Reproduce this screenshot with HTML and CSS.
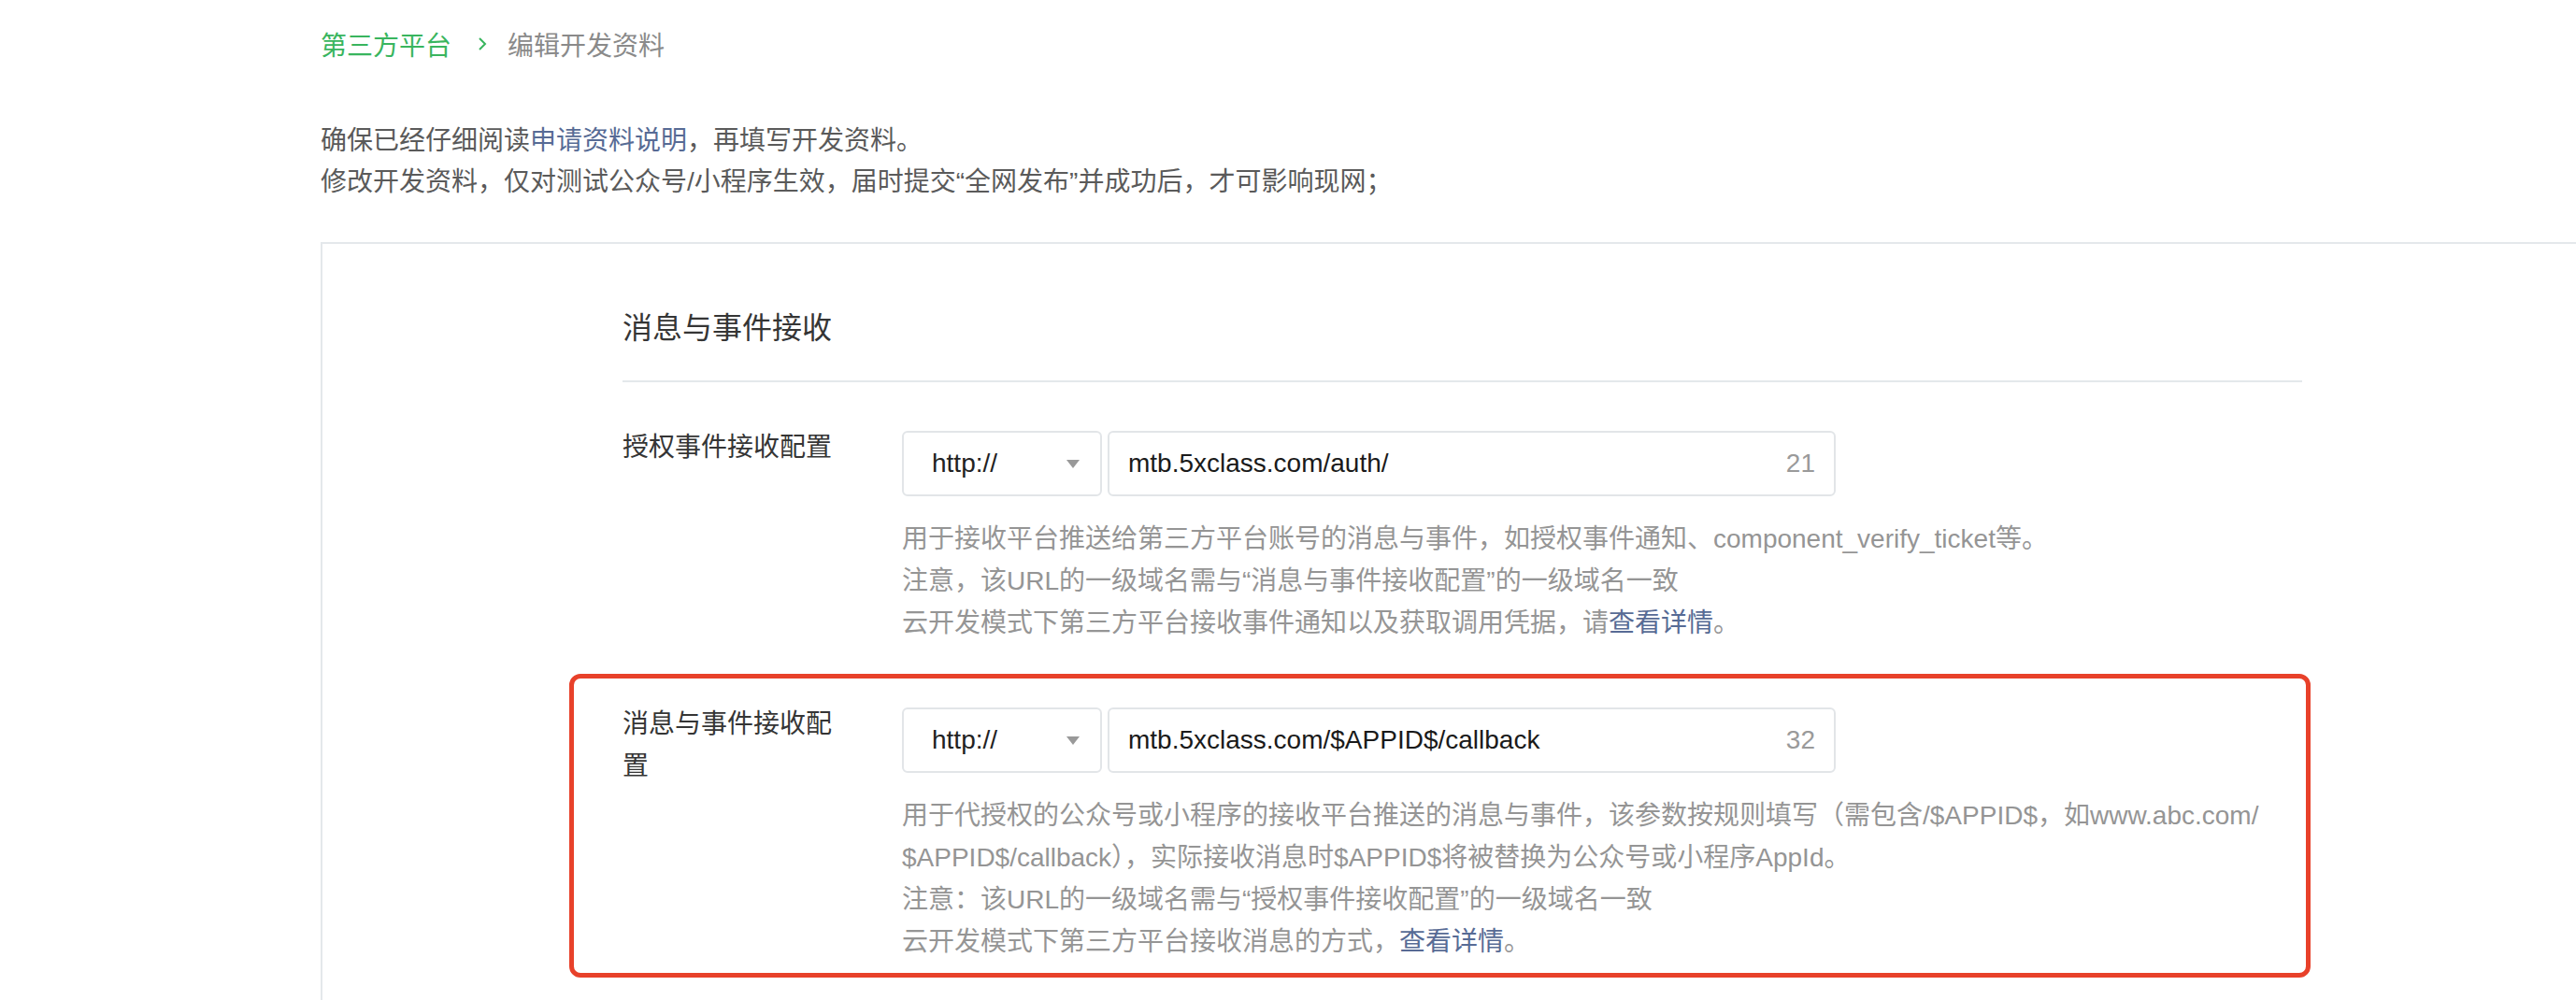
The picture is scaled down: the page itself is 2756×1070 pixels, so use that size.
FILE: index.html
```html
<!DOCTYPE html>
<html lang="zh-CN">
<head>
    <meta charset="UTF-8">
    <title>编辑开发资料</title>
    <link rel="stylesheet" href="styles.css">
</head>
<body>

    <div class="page">
        <div class="breadcrumb">
            <a class="crumb-link" href="#">第三方平台</a>
            <svg class="crumb-sep" width="10" height="16" viewBox="0 0 10 16"><polyline points="2,2 8,8 2,14" fill="none" stroke="#39b55e" stroke-width="2"/></svg>
            <span class="crumb-current">编辑开发资料</span>
        </div>

        <div class="intro">
            <p>确保已经仔细阅读<a href="#">申请资料说明</a>，再填写开发资料。</p>
            <p>修改开发资料，仅对测试公众号/小程序生效，届时提交“全网发布”并成功后，才可影响现网；</p>
        </div>

        <div class="card">
            <h2 class="card-title">消息与事件接收</h2>

            <div class="form-item">
                <label class="form-label">授权事件接收配置</label>
                <div class="form-body">
                    <div class="controls">
                        <div class="select">
                            <span>http://</span>
                            <i class="arrow"></i>
                        </div>
                        <div class="input">
                            <span class="value">mtb.5xclass.com/auth/</span>
                            <span class="counter">21</span>
                        </div>
                    </div>
                    <div class="help">
                        <p>用于接收平台推送给第三方平台账号的消息与事件，如授权事件通知、component_verify_ticket等。</p>
                        <p>注意，该URL的一级域名需与“消息与事件接收配置”的一级域名一致</p>
                        <p>云开发模式下第三方平台接收事件通知以及获取调用凭据，请<a href="#">查看详情</a>。</p>
                    </div>
                </div>
            </div>

            <div class="form-item marked">
                <label class="form-label">消息与事件接收配置</label>
                <div class="form-body">
                    <div class="controls">
                        <div class="select">
                            <span>http://</span>
                            <i class="arrow"></i>
                        </div>
                        <div class="input">
                            <span class="value">mtb.5xclass.com/$APPID$/callback</span>
                            <span class="counter">32</span>
                        </div>
                    </div>
                    <div class="help">
                        <p>用于代授权的公众号或小程序的接收平台推送的消息与事件，该参数按规则填写（需包含/$APPID$，如www.abc.com/<br>$APPID$/callback），实际接收消息时$APPID$将被替换为公众号或小程序AppId。</p>
                        <p>注意：该URL的一级域名需与“授权事件接收配置”的一级域名一致</p>
                        <p>云开发模式下第三方平台接收消息的方式，<a href="#">查看详情</a>。</p>
                    </div>
                </div>
            </div>
        </div>
    </div>

</body>
</html>
```

FILE: styles.css
```css
body {
    margin: 0;
    background-color: #fff;
    font-family: "Liberation Sans", "Noto Sans CJK SC", sans-serif;
    font-size: 28px;
    color: #353535;
    overflow: hidden;
}

p {
    margin: 0;
}

a {
    color: #576b95;
    text-decoration: none;
}

.page {
    padding: 27px 0 0 343px;
}

.breadcrumb {
    display: flex;
    align-items: center;
    height: 40px;
}

.crumb-link {
    color: #39b55e;
}

.crumb-sep {
    margin: 0 22px 0 28px;
}

.crumb-current {
    color: #8a8a8a;
}

.intro {
    margin-top: 62px;
    line-height: 44px;
    color: #5a5a5a;
}

.card {
    margin-top: 42px;
    margin-right: -40px;
    border: 2px solid #e4e8eb;
    padding: 68px 0 120px 321px;
}

.card-title {
    width: 1797px;
    margin: 0;
    padding-bottom: 34px;
    border-bottom: 2px solid #e4e8eb;
    font-size: 32px;
    font-weight: normal;
    line-height: 44px;
    color: #353535;
}

.form-item {
    display: flex;
    width: 1797px;
    margin-top: 52px;
}

.form-item + .form-item {
    margin-top: 68px;
}

.form-label {
    width: 232px;
    margin: -5px 67px 0 0;
    line-height: 45px;
    color: #353535;
}

.form-body {
    flex: 1;
}

.controls {
    display: flex;
    gap: 6px;
}

.select, .input {
    box-sizing: border-box;
    height: 70px;
    display: flex;
    align-items: center;
    border: 2px solid #e2e5e8;
    border-radius: 6px;
    background-color: #fff;
}

.select {
    width: 214px;
    padding: 0 22px 0 30px;
    justify-content: space-between;
    color: #222;
}

.arrow {
    width: 0;
    height: 0;
    border-left: 7px solid transparent;
    border-right: 7px solid transparent;
    border-top: 9px solid #999;
}

.input {
    width: 779px;
    padding: 0 20px 0 20px;
    justify-content: space-between;
}

.value {
    color: #1a1a1a;
}

.counter {
    color: #9a9a9a;
}

.help {
    margin-top: 23px;
    line-height: 45px;
    color: #959595;
}

/* red annotation frame drawn over the second row */
.marked {
    position: relative;
}

.marked::after {
    content: "";
    position: absolute;
    top: -36px;
    left: -57px;
    right: -9px;
    bottom: -16px;
    border: 5px solid #e8412a;
    border-radius: 12px;
    pointer-events: none;
}
```
